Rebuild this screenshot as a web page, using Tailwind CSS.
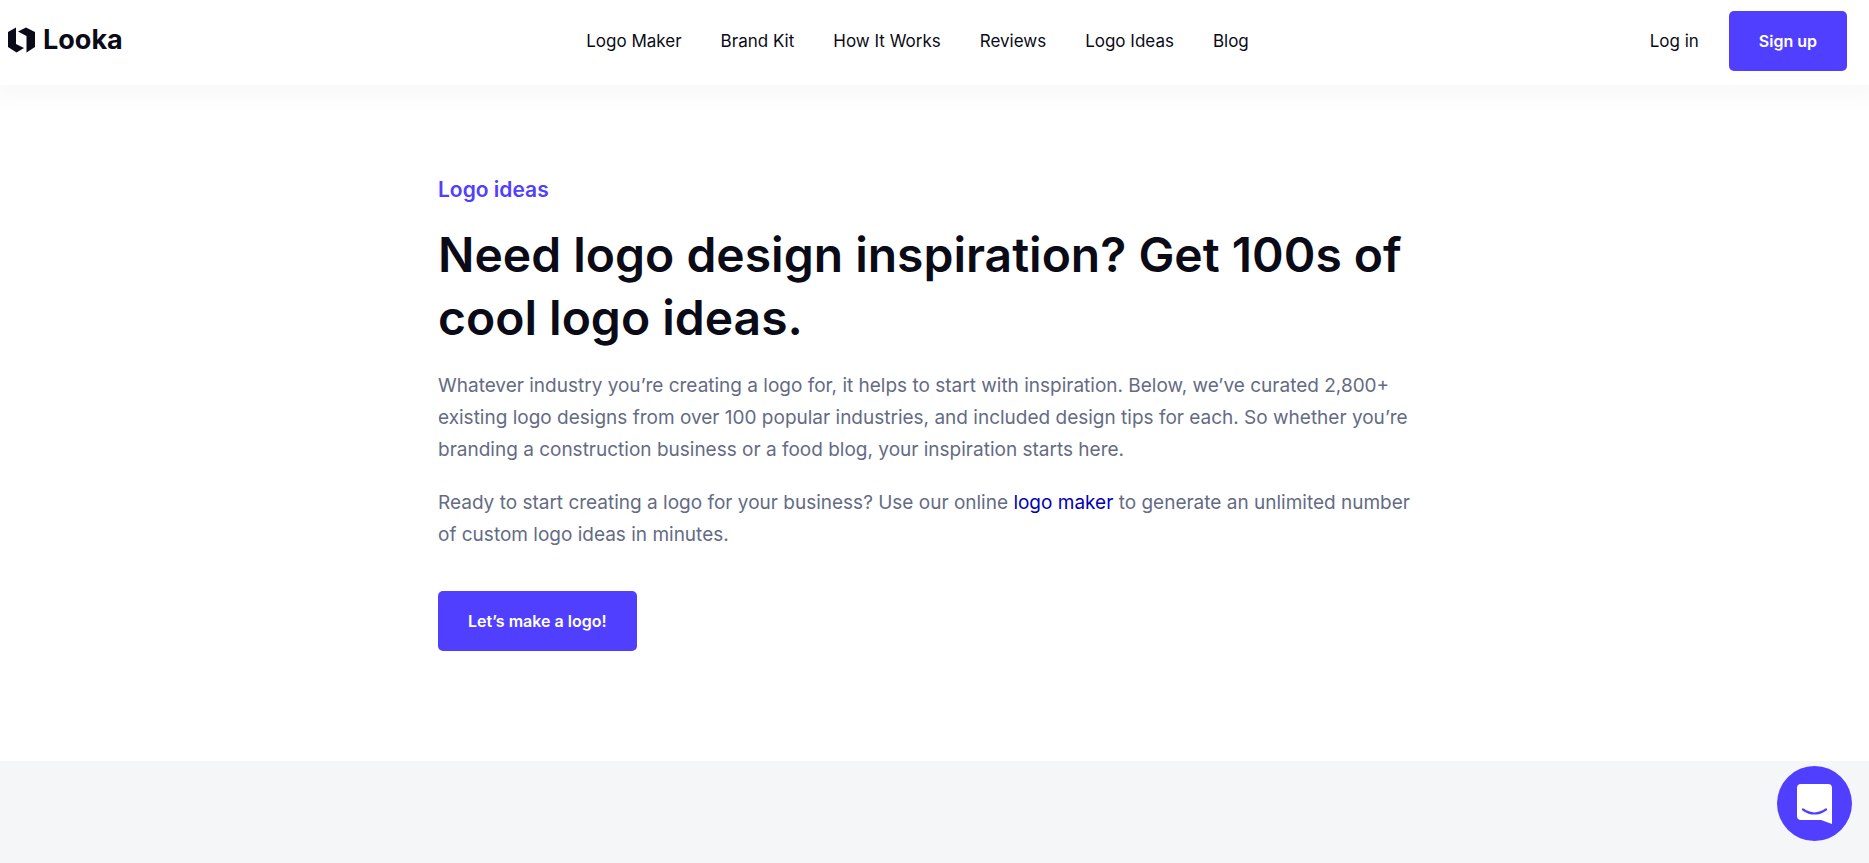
<!DOCTYPE html>
<html lang="en">
<head>
    <meta charset="UTF-8">
    <meta name="viewport" content="width=device-width, initial-scale=1.0">
    <title>Logo Ideas | Looka</title>
    <script src="https://cdn.jsdelivr.net/npm/@tailwindcss/browser@4"></script>
</head>
<body class="bg-white font-['Inter',sans-serif] text-[#0a0b17]">

    <header class="relative flex items-center bg-white pt-[11px] pb-[14px] pl-2 pr-[22px] shadow-[0_4px_20px_12px_rgba(20,20,70,0.025)]">
        <div class="flex-1">
            <a href="#" class="inline-flex items-center gap-2 pt-px text-[27px] font-bold leading-8">
                <svg class="h-[26px] w-[27px]" viewBox="0 0 27 26" fill="currentColor" aria-hidden="true">
                    <path d="M8 0.5 L0 5 V20 L8.5 25.5 L16 21 L8 17 Z"/>
                    <path d="M10 4.5 L18 0.5 L27 5 V20 L18.5 25.5 V9 Z"/>
                </svg>
                Looka
            </a>
        </div>
        <nav class="mr-5 flex gap-[39px] text-[17px] leading-6">
            <a href="#">Logo Maker</a>
            <a href="#">Brand Kit</a>
            <a href="#">How It Works</a>
            <a href="#">Reviews</a>
            <a href="#">Logo Ideas</a>
            <a href="#">Blog</a>
        </nav>
        <div class="flex flex-1 items-center justify-end gap-[30px] text-[17px] leading-6">
            <a href="#">Log in</a>
            <a href="#" class="rounded-[5px] bg-[#513fff] px-[30px] py-[18px] text-[16px] font-semibold leading-6 text-white">Sign up</a>
        </div>
    </header>

    <main>
        <section class="mx-auto max-w-[993px] pt-[89px] pb-[110px]">
            <p class="text-[21px] font-semibold leading-8 text-[#513fff]">Logo ideas</p>
            <h1 class="mt-[17px] text-[48px] font-semibold leading-[63px]">Need logo design inspiration? Get 100s of cool logo ideas.</h1>
            <div class="mt-[21px] flex flex-col gap-[21px] text-[19px] leading-[32px] text-[#646b84]">
                <p>Whatever industry you’re creating a logo for, it helps to start with inspiration. Below, we’ve curated 2,800+ existing logo designs from over 100 popular industries, and included design tips for each. So whether you’re branding a construction business or a food blog, your inspiration starts here.</p>
                <p>Ready to start creating a logo for your business? Use our online <a href="#" class="text-[#0000b8]">logo maker</a> to generate an unlimited number of custom logo ideas in minutes.</p>
            </div>
            <a href="#" class="mt-10 inline-block rounded-[5px] bg-[#513fff] px-[30px] py-[18px] text-[16px] font-semibold leading-6 text-white">Let’s make a logo!</a>
        </section>
        <section class="h-[102px] bg-[#f4f6f8]"></section>
    </main>

    <button aria-label="Open chat" class="fixed right-[17px] bottom-[22px] flex size-[75px] items-center justify-center rounded-full bg-[#513fff]">
        <svg class="h-10 w-[35px]" viewBox="0 0 35 40" aria-hidden="true">
            <path fill="#fff" d="M4 0 H31 Q35 0 35 4 V40 L24 36 H4 Q0 36 0 32 V4 Q0 0 4 0 Z"/>
            <path fill="none" stroke="#513fff" stroke-width="2.2" stroke-linecap="round" d="M6 25.5 Q17.5 33.5 29 25.5"/>
        </svg>
    </button>

</body>
</html>
